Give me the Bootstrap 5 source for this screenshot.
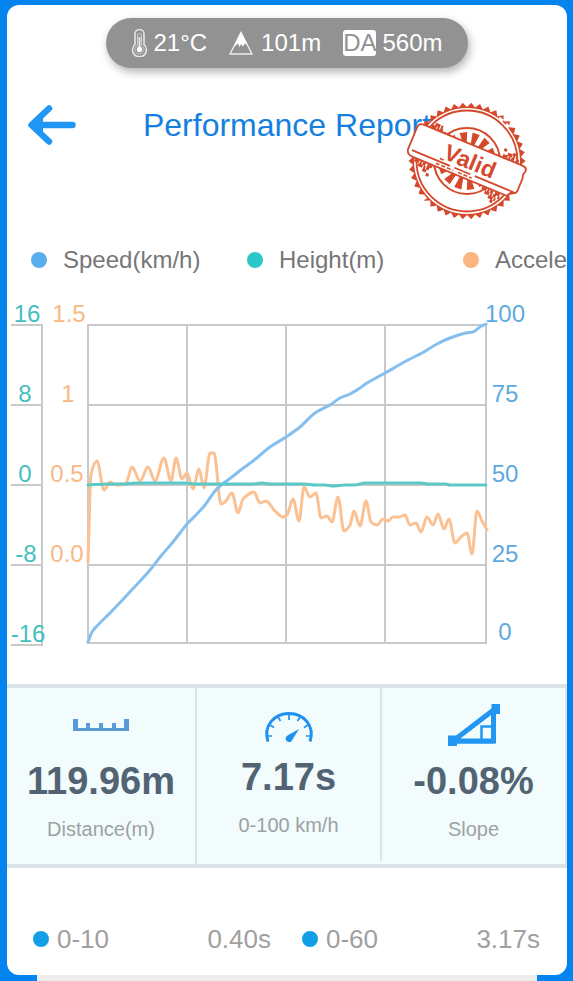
<!DOCTYPE html>
<html lang="en">
<head>
<meta charset="utf-8">
<meta name="viewport" content="width=device-width, initial-scale=1">
<title>Performance Report</title>
<link href="https://cdn.jsdelivr.net/npm/bootstrap@5.3.0/dist/css/bootstrap.min.css" rel="stylesheet">
<style>
body { background: #0384ee; font-family: "Liberation Sans", Arial, sans-serif; }
.report { margin: 5px 6px 0 7px; border-radius: 12px; }
.conditions { margin-top: 13px; height: 50px; padding: 0 25px 0 24px; gap: 22px; background: #929292; font-size: 24px; line-height: 30px; box-shadow: 2px 4px 8px rgba(0,0,0,.3); }
.density { gap: 6px; }
.da-tag { background: #fff; color: #929292; border-radius: 3px; line-height: 26px; }
.title-bar { display: grid; grid-template-columns: 1fr auto 1fr; margin-top: 37px; padding: 0 21px; }
.title-bar h1 { font-size: 32px; line-height: 40px; color: #1580e0; }
.back { width: 48px; height: 40px; }
.stamp { right: 40px; top: -4px; width: 120px; height: 120px; }
.stamp text { font: bold 23px "Liberation Sans", Arial, sans-serif; }
.series { margin-top: 100px; padding-left: 24px; font-size: 24px; line-height: 30px; color: #767676; }
.series li { flex: 0 0 216px; gap: 16px; }
.dot { width: 16px; height: 16px; flex: none; }
.dot-speed { background: #59aef0; }
.dot-height { background: #2ec7c9; }
.dot-accel { background: #fcb682; }
.dot-split { background: #129fe6; }
.chart { margin-top: 20px; }
.chart text { font: 24px "Liberation Sans", Arial, sans-serif; }
.stats { display: grid; grid-template-columns: 38fr 37fr 37fr; margin-top: 29px; background: #f2fcfc; border: solid #dae3e9; border-width: 4px 0; color: #9da2a3; font-size: 20px; line-height: 24px; }
.stat { border-right: 2px solid #dae3e9; padding: 10px 0 23px; }
.stat svg { width: 60px; height: 50px; margin-bottom: 11px; }
.stat strong { color: #526373; font-size: 38px; line-height: 44px; margin-bottom: 14px; }
.stat-time svg { margin-bottom: 7px; }
.splits { display: grid; grid-template-columns: 1fr 1fr; column-gap: 31px; margin: 55px 27px 0 26px; padding-bottom: 20px; font-size: 26px; line-height: 32px; color: #a0a0a0; }
.next-panel { height: 6px; margin: 0 36px 0 37px; background: #ededed; }
</style>
<script src="https://cdn.jsdelivr.net/npm/bootstrap@5.3.0/dist/js/bootstrap.bundle.min.js"></script>
</head>
<body>
<main class="report bg-white overflow-hidden d-flex flex-column">
  <div class="conditions d-flex align-items-center align-self-center rounded-pill text-white">
    <span class="d-flex align-items-center gap-1">
      <svg width="19" height="28" viewBox="0 0 19 28" fill="none" stroke="#e6e6e6" stroke-width="1.6" aria-hidden="true"><path d="M5 15.500V5a4.500 4.500 0 0 1 9 0v10.500a7 7 0 1 1-9 0Z"/><path d="M9.500 8V20" stroke-width="2"/><path d="M7.500 16.500V6.500a2 2 0 0 1 4 0v10a4.500 4.500 0 1 1-4 0Z" stroke-width=".7"/><circle cx="9.500" cy="20.500" r="2.700" fill="#fff" stroke="none"/></svg>
      21°C
    </span>
    <span class="d-flex align-items-center gap-2">
      <svg width="24" height="24" viewBox="0 0 24 24" aria-hidden="true"><path d="M12 1.500 23 23H1Z" fill="none" stroke="#eee" stroke-width="1.400"/><path d="m12 1 6.500 12.500-2.500-1-2 3-2-2.500-1.500 3-1.500-3.500-4 3Z" fill="#fff"/></svg>
      101m
    </span>
    <span class="density d-flex align-items-center"><span class="da-tag">DA</span>560m</span>
  </div>

  <header class="title-bar position-relative">
    <button type="button" class="back btn p-0 border-0 d-flex" aria-label="Back">
      <svg width="48" height="40" viewBox="0 0 48 40" fill="none" stroke="#2196f3" stroke-width="6.500" stroke-linecap="round" stroke-linejoin="round"><path d="M44.500 20H4M21 3.500 3.500 20 21 36.500"/><path d="M5 20 14 12.500V27.500Z" fill="#2196f3" stroke-width="2"/></svg>
    </button>
    <h1 class="m-0 fw-normal text-nowrap">Performance Report</h1>
    <svg class="stamp position-absolute" viewBox="-60 -60 120 120" role="img" aria-label="Valid stamp">
      <g fill="none" stroke="#d4482c">
        <path id="teeth" fill="#d4482c" fill-rule="evenodd" stroke="none"/>
        <circle r="50.500" stroke-width="1.800"/>
        <circle r="33" stroke-width="2"/>
        <path id="rays" fill="#d4482c" stroke="none"/>
        <path d="M39-37l3 3M32-43l4 3M-44 35l3 3" stroke="#fff" stroke-width="3"/>
      </g>
      <g transform="rotate(22.500)" stroke="#d4482c" fill="none">
        <path d="M-46-19h13M-43-22h9M-38-17h14M31-19h17M35-22h10M30-25h3M40-24h3M-49 19h20M-44 22h14M-38 25h4M-33 28h3M24 19h20M28 22h16M33 25h8M36 28h3" stroke-width="3" stroke-dasharray="5 1 2 1 3 2"/>
        <path d="M-54-17h107q5 0 5 4l-1 4 1 4v13q0 4-5 4l-3 5h-101q-8 0-8-6v-23q0-5 5-5Z" fill="#fff" stroke-width="1.800"/>
        <path d="M-55 11h41M-9 11h17M13 11h42" stroke-width="1.800"/>
        <path d="M-28 14h19M-26 8h5M-4 14h15" stroke-width="1.500" stroke-dasharray="4 2"/>
        <text x="3" y="7" text-anchor="middle" fill="#d4482c" stroke="#fff" stroke-width="4" paint-order="stroke">Valid</text>
      </g>
    </svg>
  </header>

  <ul class="series list-unstyled d-flex mb-0 overflow-hidden">
    <li class="d-flex align-items-center"><span class="dot dot-speed rounded-circle"></span>Speed(km/h)</li>
    <li class="d-flex align-items-center"><span class="dot dot-height rounded-circle"></span>Height(m)</li>
    <li class="d-flex align-items-center"><span class="dot dot-accel rounded-circle"></span>Accele</li>
  </ul>

  <svg class="chart w-100" viewBox="7 295 560 360" role="img" aria-label="Speed, height and acceleration over the run">
    <g stroke="#c9c9c9" stroke-width="2" fill="none">
      <path d="M88 325H486V643H88ZM187 325V643M286 325V643M385 325V643M88 405H486M88 485H486M88 565H486"/>
      <path d="M42 325V645M11 325H43M11 405H43M11 485H43M11 565H43M11 645H43"/>
    </g>
    <g fill="none" stroke-linecap="round" stroke-linejoin="round" stroke-width="3">
      <path id="accel" stroke="#fbc193"/>
      <path id="speed" stroke="#84bff0"/>
      <path id="height" stroke="#5dc8c8"/>
    </g>
    <g fill="#43bfbd" text-anchor="middle">
      <text x="27" y="322">16</text><text x="25" y="402">8</text><text x="25" y="482">0</text><text x="26" y="562">-8</text><text x="28" y="642">-16</text>
    </g>
    <g fill="#f8b985" text-anchor="middle">
      <text x="69" y="322">1.5</text><text x="68" y="402">1</text><text x="67" y="482">0.5</text><text x="67" y="562">0.0</text>
    </g>
    <g fill="#5fa9e1" text-anchor="middle">
      <text x="505" y="322">100</text><text x="505" y="402">75</text><text x="505" y="482">50</text><text x="505" y="562">25</text><text x="505" y="640">0</text>
    </g>
  </svg>

  <section class="stats text-center">
    <div class="stat d-flex flex-column align-items-center">
      <svg viewBox="0 0 60 50" aria-hidden="true"><path d="M2 21h5v9h8v-5h4v5h9v-5h4v5h9v-5h4v5h8v-9h5v12H2Z" fill="#5b9bd5"/></svg>
      <strong>119.96m</strong>
      <span>Distance(m)</span>
    </div>
    <div class="stat stat-time d-flex flex-column align-items-center align-self-start pb-0">
      <svg viewBox="0 0 60 50" fill="none" stroke="#1e90f0" aria-hidden="true"><path d="M9 43.500C4 28 15 15.500 30 15.500S56 28 51 43.500" stroke-width="3"/><path d="M8 38h5M52 38h-5M11 27l4 2.500M49 27l-4 2.500M19 19l2.500 4M41 19l-2.500 4M30 16v6" stroke-width="1.700"/><path d="M40 31 33.500 41.500a3.500 3.500 0 1 1-5-4Z" fill="#1e90f0" stroke="none"/></svg>
      <strong>7.17s</strong>
      <span class="pb-4">0-100 km/h</span>
    </div>
    <div class="stat d-flex flex-column align-items-center">
      <svg viewBox="0 0 60 50" aria-hidden="true"><path d="M9 43 49.500 12V43Z" fill="none" stroke="#2196f3" stroke-width="5" stroke-linejoin="bevel"/><path d="M47 40h5v5.500h-5ZM9 41h40v4.500H9Z" fill="#2196f3"/><path d="M37.500 43V28.500H49" fill="none" stroke="#2196f3" stroke-width="2.500"/><path d="M4 37.500h9v10.500H4ZM47.500 6h8.500v10h-8.500Z" fill="#2196f3"/></svg>
      <strong>-0.08%</strong>
      <span>Slope</span>
    </div>
  </section>

  <section class="splits">
    <div class="d-flex align-items-center gap-2"><span class="dot dot-split rounded-circle"></span><span>0-10</span><span class="ms-auto">0.40s</span></div>
    <div class="d-flex align-items-center gap-2"><span class="dot dot-split rounded-circle"></span><span>0-60</span><span class="ms-auto">3.17s</span></div>
  </section>
</main>
<div class="next-panel"></div>

<script>
const accel = [[88,562],[91,474],[97,461],[104,490],[110,482],[116,485],[120,485],[126,483],[132,467],[140,481],[148,467],[155,481],[164,458],[171,481],[176,458],[182,479],[187,473],[193,489],[199,469],[204,488],[210,453],[214,453],[221,504],[225,502],[232,493],[238,513],[243,499],[254,492],[260,503],[266,501],[275,511],[283,517],[287,515],[293,499],[299,521],[304,487],[310,497],[316,493],[321,518],[327,516],[332,522],[338,497],[344,531],[350,525],[354,511],[360,526],[366,501],[371,522],[377,525],[383,519],[388,521],[393,517],[399,517],[405,515],[410,525],[416,523],[421,532],[427,517],[433,525],[438,514],[444,529],[449,519],[455,543],[461,537],[467,533],[472,554],[477,511],[482,521],[487,530]];
const speed = [[88,642],[92,632],[97,626],[110,613],[128,594],[150,570],[161,556],[173,542],[180,533],[187,524],[196,515],[205,505],[215,491],[220,486],[232,477],[242,469],[253,461],[270,447],[286,437],[300,427],[315,413],[330,405],[340,398],[350,394],[360,388],[367,383],[385,373],[408,360],[422,353],[437,344],[450,338],[466,333],[473,332],[480,327],[486,324]];
const height = [[88,485],[108,484],[125,484],[135,483],[185,483],[195,484],[252,484],[262,483],[270,484],[305,484],[315,485],[325,485],[333,486],[345,485],[355,485],[365,483],[421,483],[428,484],[445,484],[450,485],[486,485]];
// Cubic segments whose slopes keep each peak and valley at its own data point.
function smooth(p) {
  const n = p.length, s = [], m = [];
  for (let i = 0; i < n - 1; i++) s.push((p[i+1][1] - p[i][1]) / (p[i+1][0] - p[i][0]));
  for (let i = 0; i < n; i++) {
    const a = s[i-1], b = s[i];
    m.push(a === undefined ? b : b === undefined ? a : a * b <= 0 ? 0 : 2 * a * b / (a + b));
  }
  let d = `M${p[0]}`;
  for (let i = 1; i < n; i++) {
    const h = (p[i][0] - p[i-1][0]) / 3;
    d += `C${p[i-1][0]+h},${p[i-1][1]+h*m[i-1]} ${p[i][0]-h},${p[i][1]-h*m[i]} ${p[i]}`;
  }
  return d;
}
const set = (id, d) => document.getElementById(id).setAttribute('d', d);
set('accel', smooth(accel));
set('speed', smooth(speed));
set('height', smooth(height));

const polar = (r, a) => [r * Math.cos(a), r * Math.sin(a)].map(v => v.toFixed(2));
const star = [];
for (let i = 0; i < 84; i++) star.push(polar(i % 2 ? 54 : 58.5, i * Math.PI / 42));
set('teeth', `M${star.join('L')}ZM53 0A53 53 0 1 0-53 0A53 53 0 1 0 53 0Z`);
let rays = '';
for (let i = 0; i < 14; i++) {
  const a = i * Math.PI / 7 + 0.1;
  rays += `M${polar(15, a - .1)}L${polar(29, a - .13)}L${polar(29, a + .13)}L${polar(15, a + .1)}Z`;
}
set('rays', rays);
</script>
</body>
</html>
